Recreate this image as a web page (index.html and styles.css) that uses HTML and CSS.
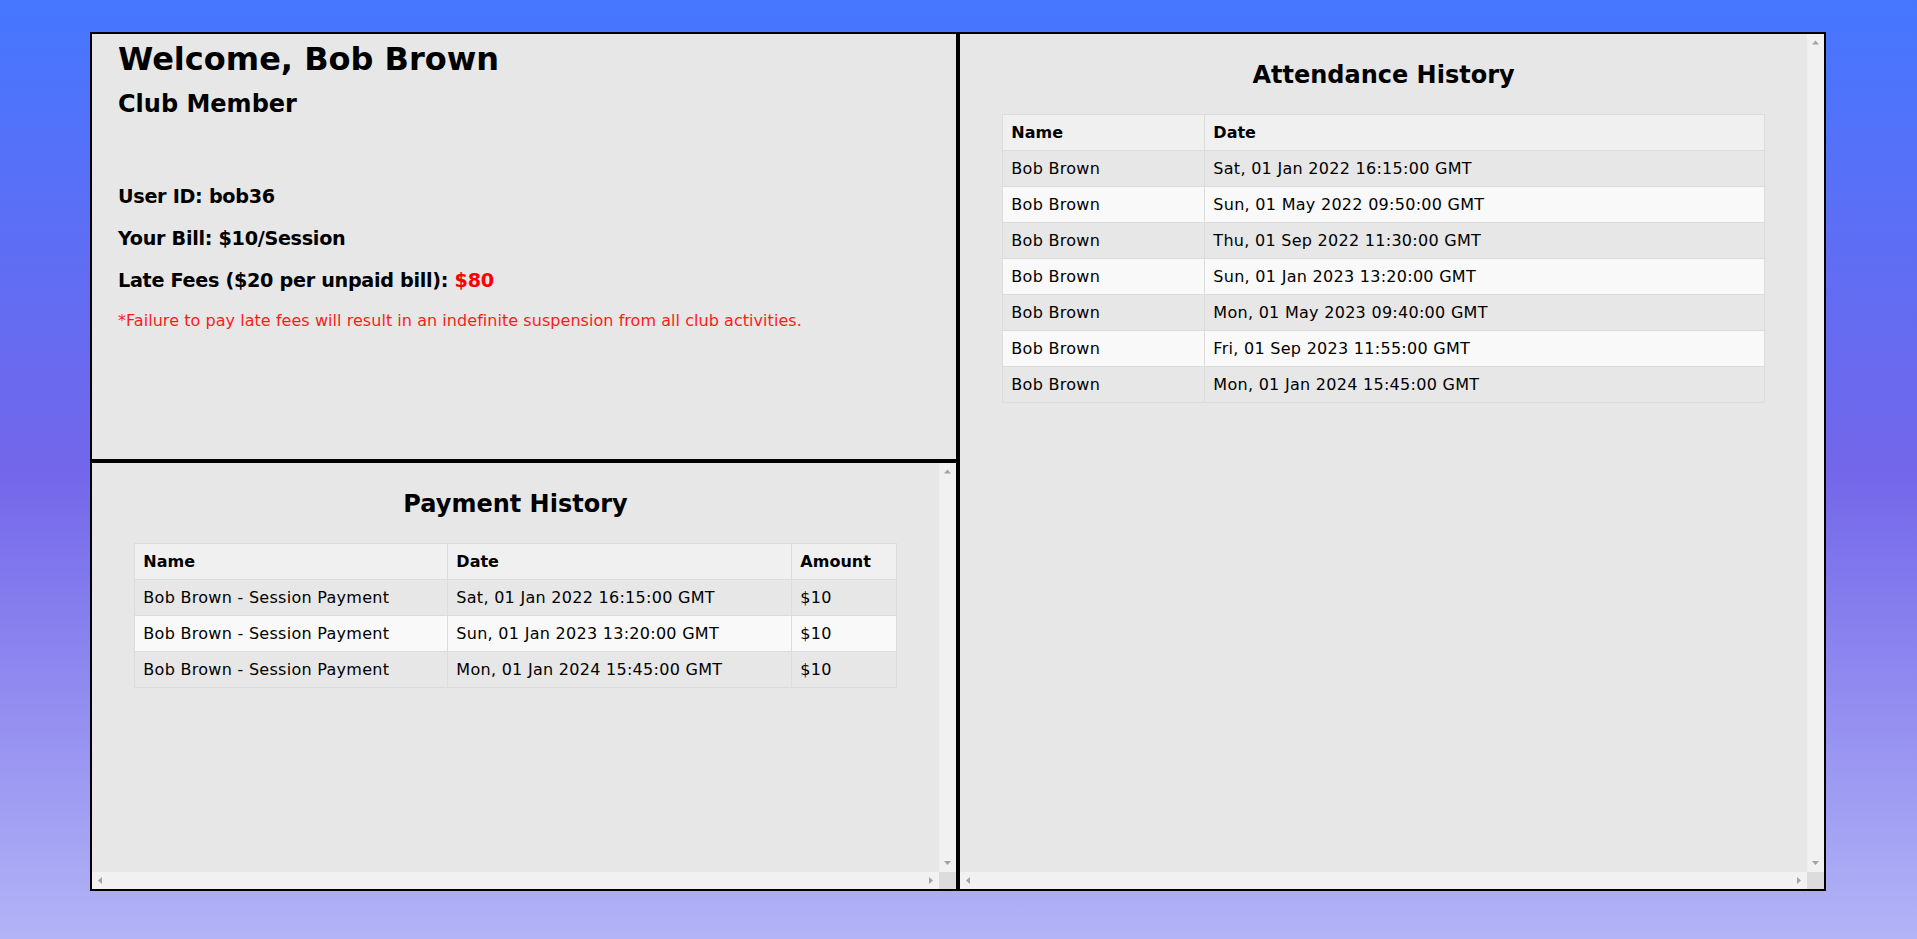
FILE: index.html
```html
<!DOCTYPE html>
<html lang="en">
<head>
<meta charset="utf-8">
<title>Member Dashboard</title>
<link rel="stylesheet" href="styles.css">
</head>
<body>
<div class="dashboard">
  <section class="panel profile">
    <h1 class="welcome">Welcome, Bob Brown</h1>
    <h2 class="role">Club Member</h2>
    <div class="info">
      <h3 class="info-line">User ID: bob36</h3>
      <h3 class="info-line">Your Bill: $10/Session</h3>
      <h3 class="info-line">Late Fees ($20 per unpaid bill): <span class="due">$80</span></h3>
      <p class="warning">*Failure to pay late fees will result in an indefinite suspension from all club activities.</p>
    </div>
  </section>

  <section class="panel scroll-panel attendance">
    <div class="scroll-view">
      <h2 class="panel-title">Attendance History</h2>
      <table class="history">
        <thead>
          <tr><th class="att-name">Name</th><th>Date</th></tr>
        </thead>
        <tbody>
          <tr><td>Bob Brown</td><td>Sat, 01 Jan 2022 16:15:00 GMT</td></tr>
          <tr><td>Bob Brown</td><td>Sun, 01 May 2022 09:50:00 GMT</td></tr>
          <tr><td>Bob Brown</td><td>Thu, 01 Sep 2022 11:30:00 GMT</td></tr>
          <tr><td>Bob Brown</td><td>Sun, 01 Jan 2023 13:20:00 GMT</td></tr>
          <tr><td>Bob Brown</td><td>Mon, 01 May 2023 09:40:00 GMT</td></tr>
          <tr><td>Bob Brown</td><td>Fri, 01 Sep 2023 11:55:00 GMT</td></tr>
          <tr><td>Bob Brown</td><td>Mon, 01 Jan 2024 15:45:00 GMT</td></tr>
        </tbody>
      </table>
    </div>
    <div class="vbar">
      <svg class="arrow" width="17" height="17" viewBox="0 0 17 17"><path d="M5 10.5h7l-3.5-4z" fill="#a3a3a3"/></svg>
      <svg class="arrow" width="17" height="17" viewBox="0 0 17 17"><path d="M5 6h7l-3.5 4z" fill="#a3a3a3"/></svg>
    </div>
    <div class="hbar">
      <svg class="arrow" width="17" height="17" viewBox="0 0 17 17"><path d="M10 5v7l-4-3.5z" fill="#a3a3a3"/></svg>
      <svg class="arrow" width="17" height="17" viewBox="0 0 17 17"><path d="M7 5v7l4-3.5z" fill="#a3a3a3"/></svg>
    </div>
    <div class="corner"></div>
  </section>

  <section class="panel scroll-panel payments">
    <div class="scroll-view">
      <h2 class="panel-title">Payment History</h2>
      <table class="history">
        <thead>
          <tr><th class="pay-name">Name</th><th class="pay-date">Date</th><th>Amount</th></tr>
        </thead>
        <tbody>
          <tr><td>Bob Brown - Session Payment</td><td>Sat, 01 Jan 2022 16:15:00 GMT</td><td>$10</td></tr>
          <tr><td>Bob Brown - Session Payment</td><td>Sun, 01 Jan 2023 13:20:00 GMT</td><td>$10</td></tr>
          <tr><td>Bob Brown - Session Payment</td><td>Mon, 01 Jan 2024 15:45:00 GMT</td><td>$10</td></tr>
        </tbody>
      </table>
    </div>
    <div class="vbar">
      <svg class="arrow" width="17" height="17" viewBox="0 0 17 17"><path d="M5 10.5h7l-3.5-4z" fill="#a3a3a3"/></svg>
      <svg class="arrow" width="17" height="17" viewBox="0 0 17 17"><path d="M5 6h7l-3.5 4z" fill="#a3a3a3"/></svg>
    </div>
    <div class="hbar">
      <svg class="arrow" width="17" height="17" viewBox="0 0 17 17"><path d="M10 5v7l-4-3.5z" fill="#a3a3a3"/></svg>
      <svg class="arrow" width="17" height="17" viewBox="0 0 17 17"><path d="M7 5v7l4-3.5z" fill="#a3a3a3"/></svg>
    </div>
    <div class="corner"></div>
  </section>
</div>
</body>
</html>
```

FILE: styles.css
```css
* { box-sizing: border-box; }

html, body {
  margin: 0;
  padding: 0;
}

body {
  min-height: 100vh;
  font-family: "DejaVu Sans", Verdana, sans-serif;
  font-size: 16px;
  color: #000;
  background: linear-gradient(to bottom, #4676ff 0%, #7366ea 50%, #b2b4f6 100%);
  overflow: hidden;
}

.dashboard {
  display: grid;
  grid-template-columns: 868px 868px;
  grid-template-rows: 429px 430px;
  width: 1736px;
  margin: 32px 0 0 90px;
}

.panel {
  background: #e7e7e7;
  border: 2px solid #000;
  min-height: 0;
}

.profile {
  grid-column: 1;
  grid-row: 1;
  padding: 6px 25px 0 26px;
  overflow: hidden;
}

.attendance {
  grid-column: 2;
  grid-row: 1 / span 2;
}

.payments {
  grid-column: 1;
  grid-row: 2;
}

.welcome {
  margin: 0;
  font-size: 32px;
  font-weight: bold;
  line-height: normal;
}

.role {
  margin: 12px 0 0;
  font-size: 24px;
  font-weight: bold;
  line-height: normal;
}

.info {
  margin-top: 67px;
}

.info-line {
  margin: 0 0 19.2px;
  font-size: 19.2px;
  font-weight: bold;
  line-height: normal;
  letter-spacing: -0.3px;
}

.due {
  color: #ff0000;
}

.warning {
  margin: -1px 0 0;
  color: #ff1a1a;
  font-size: 16px;
  letter-spacing: 0.05px;
}

/* scroll panels with scrollbars */
.scroll-panel {
  display: grid;
  grid-template-columns: minmax(0, 1fr) 17px;
  grid-template-rows: minmax(0, 1fr) 17px;
}

.scroll-view {
  grid-column: 1;
  grid-row: 1;
  overflow: hidden;
  padding-top: 1px;
}

.vbar {
  grid-column: 2;
  grid-row: 1;
  background: #f1f1f1;
  display: flex;
  flex-direction: column;
  justify-content: space-between;
}

.hbar {
  grid-column: 1;
  grid-row: 2;
  background: #f1f1f1;
  display: flex;
  justify-content: space-between;
}

.corner {
  grid-column: 2;
  grid-row: 2;
  background: #dcdcdc;
}

.arrow {
  display: block;
  width: 17px;
  height: 17px;
  flex: none;
}

.panel-title {
  margin: 26px 0 25px;
  text-align: center;
  font-size: 24px;
  font-weight: bold;
  line-height: 28px;
}

.history {
  width: 90%;
  margin: 0 auto;
  border-collapse: collapse;
  font-size: 16px;
}

.history th,
.history td {
  border: 1px solid #dcdcdc;
  padding: 8px;
  text-align: left;
  line-height: 19px;
}

.history td {
  letter-spacing: 0.28px;
}

.history th {
  background: #f0f0f0;
  font-weight: bold;
}

.history tbody tr:nth-child(even) {
  background: #f9f9f9;
}

.att-name { width: 202px; }
.pay-name { width: 313px; }
.pay-date { width: 344px; }
```
